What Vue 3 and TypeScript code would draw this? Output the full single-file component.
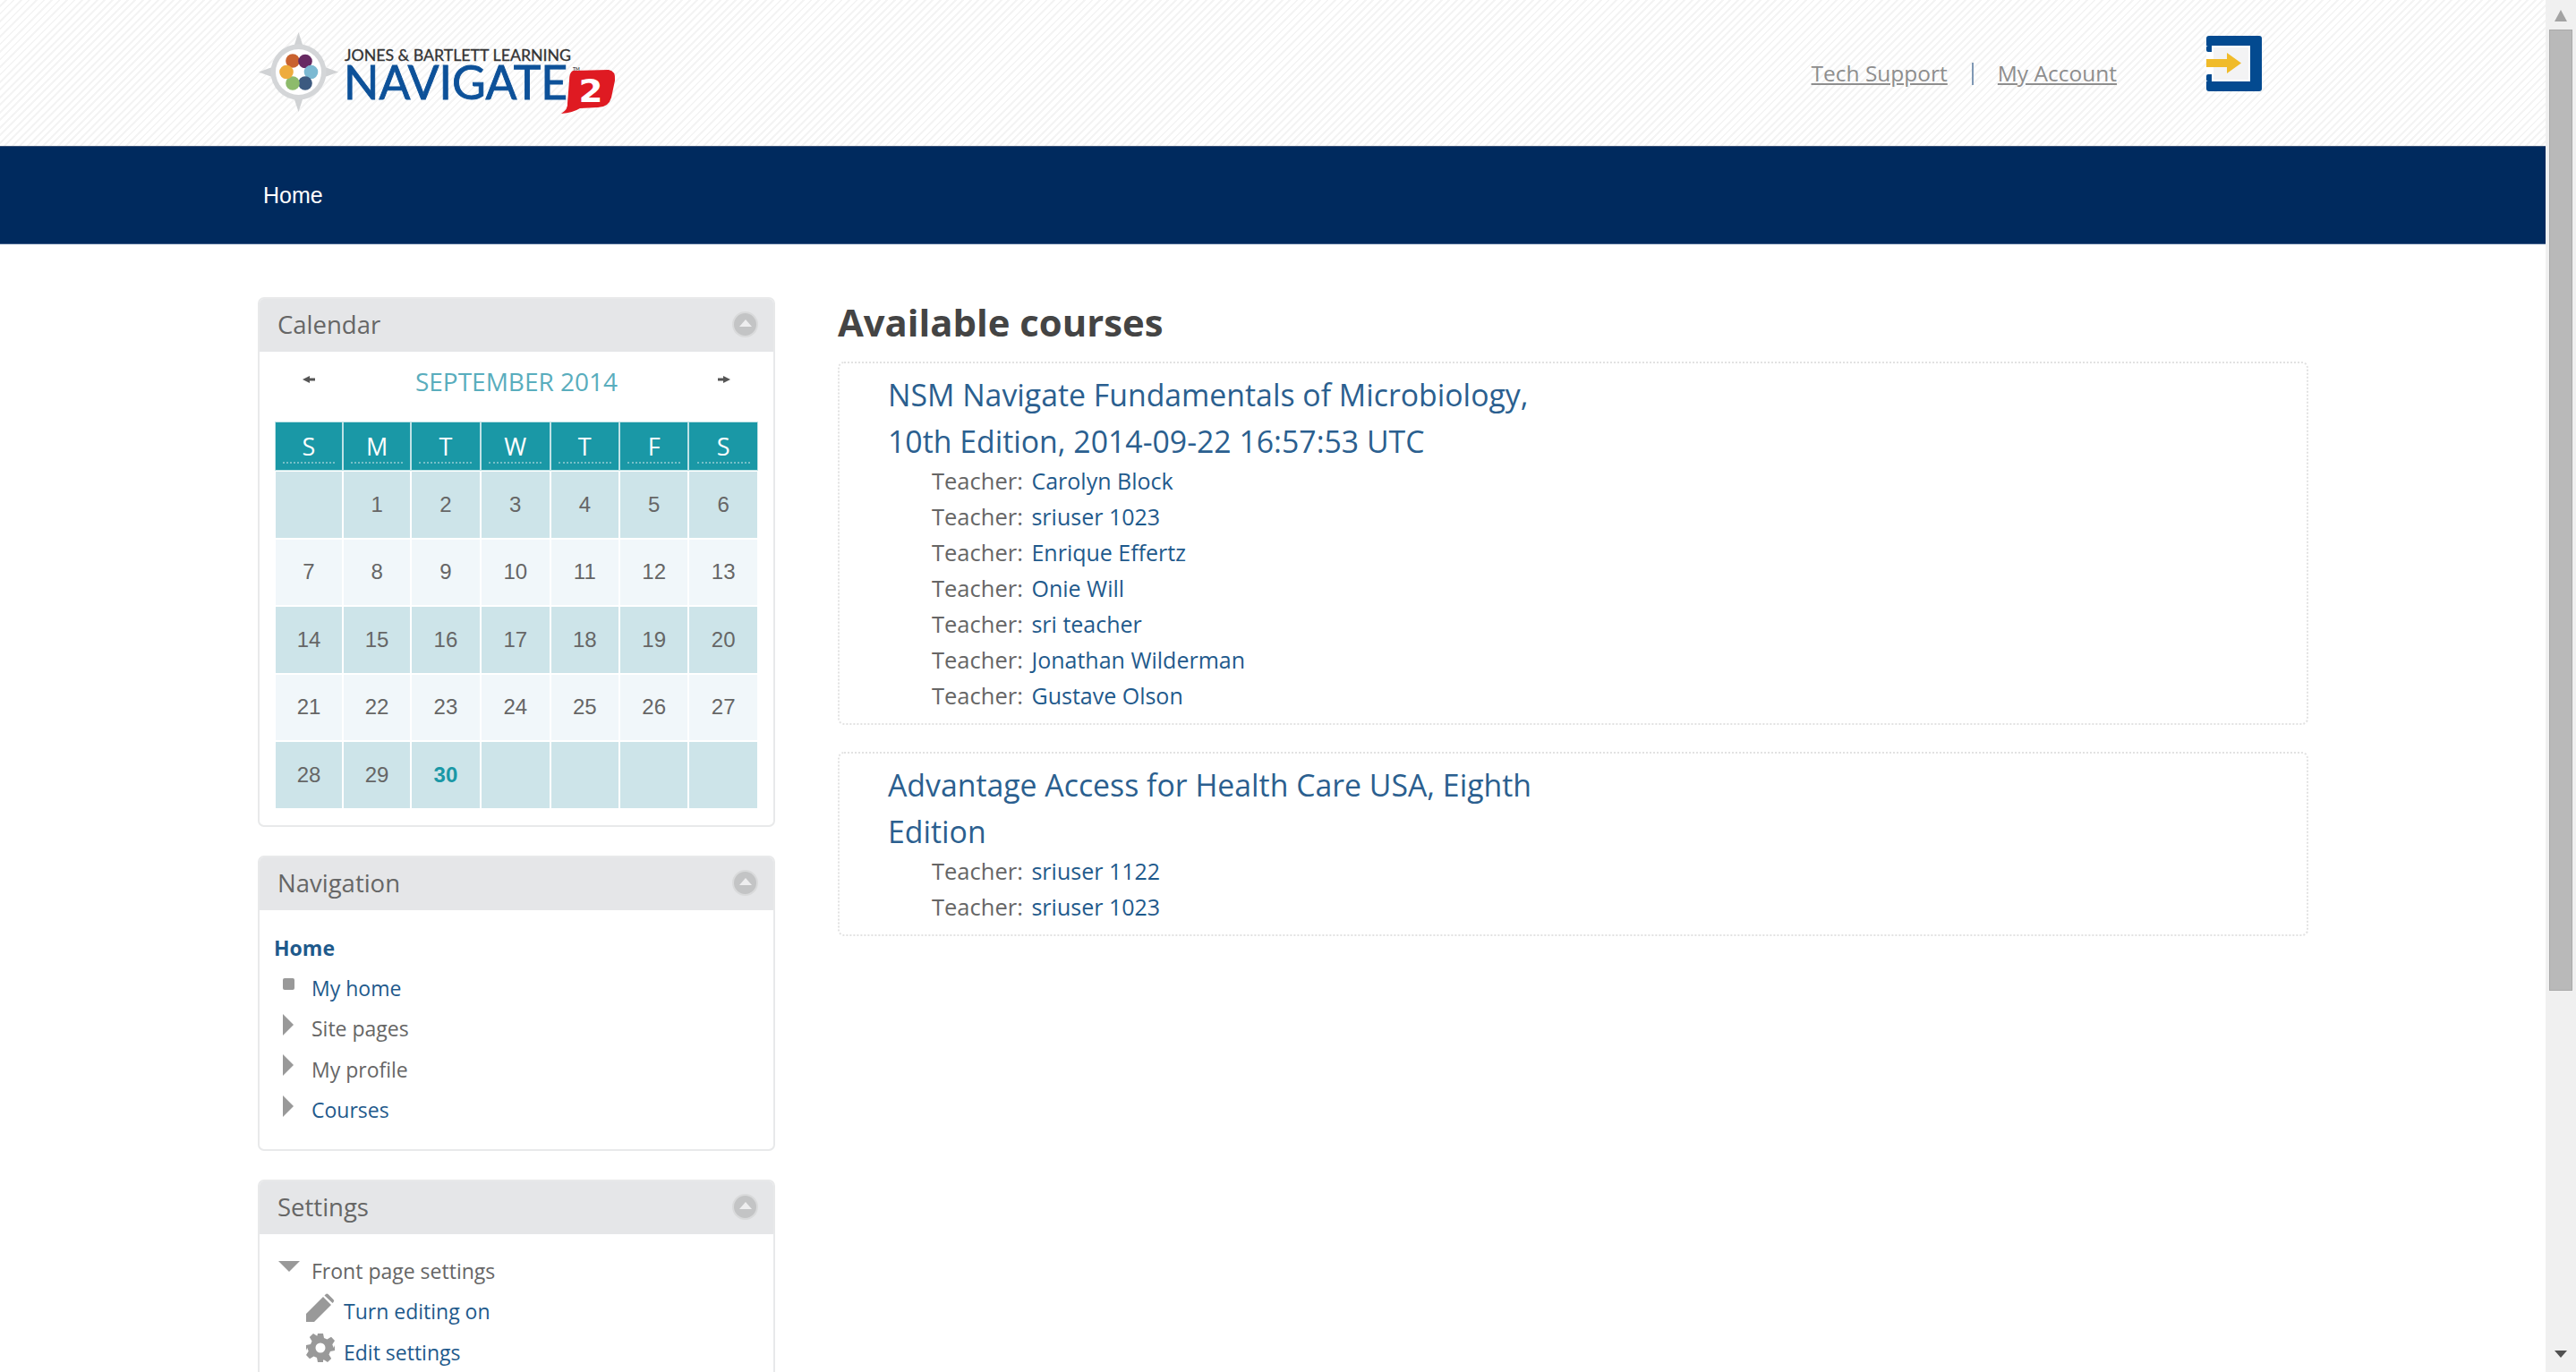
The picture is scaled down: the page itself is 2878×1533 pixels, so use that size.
<script setup lang="ts">
const weekdays: string[] = ['S', 'M', 'T', 'W', 'T', 'F', 'S']

const weeks: (number | null)[][] = [
  [null, 1, 2, 3, 4, 5, 6],
  [7, 8, 9, 10, 11, 12, 13],
  [14, 15, 16, 17, 18, 19, 20],
  [21, 22, 23, 24, 25, 26, 27],
  [28, 29, 30, null, null, null, null]
]

const today = 30

interface NavItem {
  label: string
  kind: 'leaf' | 'branch'
  link: boolean
}

const navItems: NavItem[] = [
  { label: 'My home', kind: 'leaf', link: true },
  { label: 'Site pages', kind: 'branch', link: false },
  { label: 'My profile', kind: 'branch', link: false },
  { label: 'Courses', kind: 'branch', link: true }
]

interface Course {
  lines: string[]
  teachers: string[]
}

const courses: Course[] = [
  {
    lines: ['NSM Navigate Fundamentals of Microbiology,', '10th Edition, 2014-09-22 16:57:53 UTC'],
    teachers: ['Carolyn Block', 'sriuser 1023', 'Enrique Effertz', 'Onie Will', 'sri teacher', 'Jonathan Wilderman', 'Gustave Olson']
  },
  {
    lines: ['Advantage Access for Health Care USA, Eighth', 'Edition'],
    teachers: ['sriuser 1122', 'sriuser 1023']
  }
]
</script>

<template>
  <div class="page">
    <div class="viewport">
      <header class="top">
        <svg class="logo" width="410" height="100" viewBox="280 30 410 100">
          <path d="M333.500 36 L344 68 L378 80.500 L344 93 L333.500 125 L323 93 L289 80.500 L323 68 Z" fill="#d0d2d4" />
          <circle cx="333.500" cy="80.500" r="31" fill="#d4d6d8" />
          <circle cx="333.500" cy="80.500" r="25.500" fill="#fff" />
          <circle cx="327" cy="68" r="7.800" fill="#c9622f" />
          <circle cx="341" cy="68.500" r="7.800" fill="#672a62" />
          <circle cx="347.500" cy="80.500" r="7.800" fill="#7bb9d2" />
          <circle cx="341" cy="93" r="7.800" fill="#3c5a80" />
          <circle cx="327" cy="93" r="7.800" fill="#8dbb6b" />
          <circle cx="320" cy="80.500" r="7.800" fill="#eeac3d" />
          <circle cx="334" cy="81" r="4.500" fill="#fff" />
          <text x="385" y="67.500" font-family="Lato, sans-serif" font-size="17" fill="#333" stroke="#333" stroke-width="0.300" textLength="253" lengthAdjust="spacingAndGlyphs">JONES &amp; BARTLETT LEARNING</text>
          <text x="384" y="111" font-family="Lato, sans-serif" font-size="52" fill="#0d5199" stroke="#0d5199" stroke-width="0.900" textLength="250" lengthAdjust="spacingAndGlyphs">NAVIGATE</text>
          <text x="640" y="78.500" font-family="Lato, sans-serif" font-size="5" font-weight="700" fill="#444">TM</text>
          <path d="M640 79 L680 78 Q688 79 687 90 L683 109 Q680 120 668 120 L648 121 Q640 126 627 127 Q635 122 634 115 L636 90 Q636 81 640 79 Z" fill="#df1a22" />
          <text x="660" y="114" text-anchor="middle" font-family="'DejaVu Sans', sans-serif" font-size="36" font-weight="700" fill="#fff" textLength="27" lengthAdjust="spacingAndGlyphs">2</text>
        </svg>
        <div class="top-links">
          <a class="top-link">Tech Support</a>
          <span class="top-sep"></span>
          <a class="top-link">My Account</a>
        </div>
        <svg class="login-icon" width="62" height="62" viewBox="0 0 62 62">
          <rect width="62" height="62" rx="3" fill="#034a90" />
          <rect x="0" y="11" width="49" height="40" fill="#fff" />
          <rect x="8" y="13" width="39" height="36" fill="#f3f3f4" />
          <rect x="0" y="11" width="8" height="7" fill="#034a90" rx="2" />
          <rect x="0" y="43" width="8" height="8" fill="#034a90" rx="2" />
          <rect x="6" y="11" width="2" height="7" fill="#fff" />
          <rect x="6" y="43" width="2" height="8" fill="#fff" />
          <path d="M0 26 H23 V19 L39 30.500 L23 42 V35 H0 Z" fill="#f0bb2a" />
        </svg>
      </header>

      <nav class="navbar">
        <span class="navbar-home">Home</span>
      </nav>

      <div class="content">
        <aside class="side">
          <section class="block">
            <div class="block-head">
              <span class="block-title">Calendar</span>
              <span class="collapse"><i></i></span>
            </div>
            <div class="cal">
              <div class="cal-month">
                <svg width="14" height="8" viewBox="0 0 14 8"><path d="M0 4 L8 0 V2.500 H14 V5.500 H8 V8 Z" fill="#555" /></svg>
                <span class="cal-name">SEPTEMBER 2014</span>
                <svg width="14" height="8" viewBox="0 0 14 8"><path d="M14 4 L6 0 V2.500 H0 V5.500 H6 V8 Z" fill="#555" /></svg>
              </div>
              <div class="cal-grid">
                <div v-for="(d, i) in weekdays" :key="'h' + i" class="cal-th"><span>{{ d }}</span></div>
                <template v-for="(week, w) in weeks" :key="w">
                  <div
                    v-for="(day, i) in week"
                    :key="i"
                    class="cal-td"
                    :class="{ odd: w % 2 === 0, today: day === today }"
                  >{{ day }}</div>
                </template>
              </div>
            </div>
          </section>

          <section class="block">
            <div class="block-head">
              <span class="block-title">Navigation</span>
              <span class="collapse"><i></i></span>
            </div>
            <div class="tree nav-tree">
              <div class="tree-root">Home</div>
              <div v-for="item in navItems" :key="item.label" class="tree-row">
                <span class="tree-mark">
                  <i :class="item.kind === 'leaf' ? 'dot' : 'arrow'"></i>
                </span>
                <span :class="item.link ? 'link' : 'plain'">{{ item.label }}</span>
              </div>
            </div>
          </section>

          <section class="block">
            <div class="block-head">
              <span class="block-title">Settings</span>
              <span class="collapse"><i></i></span>
            </div>
            <div class="tree settings-tree">
              <div class="tree-row">
                <span class="tree-mark"><i class="arrow-down"></i></span>
                <span class="plain">Front page settings</span>
              </div>
              <div class="tree-row sub">
                <svg class="sub-icon" width="32" height="32" viewBox="0 0 32 32">
                  <path d="M0 32 V23 L19 4 L28 13 L9 32 Z M21.500 1.500 Q23 0 24.500 1 L30.500 7 Q32 8.500 30.500 10 L29.500 11 L20.500 2.500 Z" fill="#999" />
                </svg>
                <span class="link">Turn editing on</span>
              </div>
              <div class="tree-row sub">
                <svg class="sub-icon" width="32" height="32" viewBox="0 0 32 32">
                  <path d="M13 0 H19 L20 5 L23.500 6.500 L28 3.800 L32 8 L29.300 12.300 L30.800 16 L32 13 V19 L27 20 L25.500 23.500 L28.200 28 L24 32 L19.700 29.300 L19 30 V32 H13 L12 27 L8.500 25.500 L4 28.200 L0 24 L2.700 19.700 L1.200 16 L0 19 V13 L5 12 L6.500 8.500 L3.800 4 L8 0 L12.300 2.700 Z M16 10.500 A5.500 5.500 0 1 0 16 21.500 A5.500 5.500 0 1 0 16 10.500 Z" fill="#999" fill-rule="evenodd" />
                </svg>
                <span class="link">Edit settings</span>
              </div>
            </div>
          </section>
        </aside>

        <main class="main">
          <h2 class="main-title">Available courses</h2>
          <article v-for="course in courses" :key="course.lines[0]" class="course">
            <h3 class="course-name">
              <span v-for="line in course.lines" :key="line" class="course-line">{{ line }}</span>
            </h3>
            <ul class="teachers">
              <li v-for="(t, i) in course.teachers" :key="i">Teacher: <span class="link teacher-link">{{ t }}</span></li>
            </ul>
          </article>
        </main>
      </div>
    </div>

    <div class="scrollbar">
      <i class="sb-up"></i>
      <div class="sb-thumb"></div>
      <i class="sb-down"></i>
    </div>
  </div>
</template>

<style>
html, body {
  margin: 0;
  background: #fff;
  overflow: hidden;
}
</style>

<style scoped>
.page {
  display: flex;
  height: 1533px;
  overflow: hidden;
  font-family: "Open Sans", "Noto Sans", sans-serif;
  color: #666;
}

.viewport {
  flex: 1;
  min-width: 0;
  overflow: hidden;
}

.top {
  display: flex;
  align-items: flex-start;
  height: 163px;
  box-sizing: border-box;
  padding: 30px 317px 0 280px;
  background: repeating-linear-gradient(135deg, #fff 0 4px, #f4f4f4 4px 6px);
}

.logo {
  display: block;
  flex: none;
}

.top-links {
  display: flex;
  align-items: center;
  margin-left: auto;
  margin-top: 36px;
  height: 32px;
}

.top-link {
  color: #8e8e8e;
  font-size: 24.500px;
  line-height: 32px;
  text-decoration: underline;
}

.top-sep {
  width: 2px;
  height: 25px;
  margin: 0 27px;
  background: #7f98b4;
}

.login-icon {
  flex: none;
  margin: 10px 0 0 100px;
}

.navbar {
  display: flex;
  align-items: center;
  height: 110px;
  box-sizing: border-box;
  padding: 0 0 0 294px;
  background: #002a5e;
  border-top: 1px solid #3c5478;
  border-bottom: 1px solid #47658f;
}

.navbar-home {
  color: #fff;
  font-family: "Liberation Sans", Arial, sans-serif;
  font-size: 25px;
}

.content {
  display: flex;
  align-items: flex-start;
  gap: 70px;
  padding: 59px 0 0 288px;
}

.side {
  display: flex;
  flex-direction: column;
  gap: 32px;
  flex: none;
  width: 578px;
}

.block {
  box-sizing: border-box;
  border: 2px solid #e8e9ea;
  border-radius: 7px;
  background: #fff;
  overflow: hidden;
}

.block-head {
  display: flex;
  align-items: center;
  justify-content: space-between;
  height: 57px;
  padding: 0 17px 2px 20px;
  background: #e5e6e8;
}

.block-title {
  font-size: 27.500px;
  color: #666;
}

.collapse {
  display: flex;
  align-items: center;
  justify-content: center;
  box-sizing: border-box;
  width: 29px;
  height: 29px;
  border: 2px solid #d9dadb;
  border-radius: 50%;
  background: #c3c4c5;
}

.collapse i {
  display: block;
  width: 0;
  height: 0;
  margin-top: -3px;
  border-left: 7px solid transparent;
  border-right: 7px solid transparent;
  border-bottom: 8px solid #eeeeef;
}

.cal {
  padding: 0 18px 19px;
}

.cal-month {
  display: flex;
  align-items: center;
  justify-content: space-between;
  height: 79px;
  box-sizing: border-box;
  padding: 0 30px 13px;
}

.cal-month svg {
  margin-top: -5px;
}

.cal-name {
  color: #59adbd;
  font-size: 28px;
  line-height: 1;
}

.cal-grid {
  display: grid;
  grid-template-columns: 74fr 74fr 75.500fr 76fr 75fr 75.500fr 75.500fr;
  grid-template-rows: 53px repeat(5, 73.500px);
  gap: 2px;
}

.cal-th {
  display: flex;
  align-items: center;
  justify-content: center;
  background: #1a98a6;
  outline: 1px solid #bfe2e6;
  color: #fff;
  font-size: 27px;
}

.cal-th span {
  display: block;
  width: 78%;
  text-align: center;
  line-height: 34px;
  border-bottom: 2px dotted #76bfc8;
  margin-top: 2px;
}

.cal-td {
  display: flex;
  align-items: center;
  justify-content: center;
  background: #f1f7fa;
  color: #666;
  font-family: "Liberation Sans", Arial, sans-serif;
  font-size: 24px;
}

.cal-td.odd {
  background: #cde4e9;
}

.cal-td.today {
  color: #1a98a6;
  font-weight: 700;
}

.tree {
  font-size: 23px;
  line-height: 45.500px;
  padding: 0 0 0 16px;
}

.nav-tree {
  padding-top: 20px;
  padding-bottom: 20px;
}

.settings-tree {
  padding-top: 19px;
  padding-bottom: 60px;
}

.tree-root {
  color: #1f5a8c;
  font-weight: 700;
  line-height: 45px;
  font-size: 23px;
}

.tree-row {
  display: flex;
  align-items: center;
  height: 45.500px;
}

.tree-mark {
  flex: none;
  display: flex;
  justify-content: flex-start;
  align-items: center;
  width: 42px;
  height: 100%;
  padding: 0 0 10px 10px;
  box-sizing: border-box;
}

.dot {
  display: block;
  width: 13px;
  height: 13px;
  border-radius: 2px;
  background: #999;
}

.arrow {
  display: block;
  width: 0;
  height: 0;
  border-top: 12px solid transparent;
  border-bottom: 12px solid transparent;
  border-left: 12px solid #999;
}

.arrow-down {
  display: block;
  width: 0;
  height: 0;
  margin-left: -5px;
  border-left: 12px solid transparent;
  border-right: 12px solid transparent;
  border-top: 12px solid #999;
}

.tree-row.sub {
  padding-left: 36px;
}

.sub-icon {
  flex: none;
  margin-right: 10px;
  margin-top: -10px;
}

.link {
  color: #1f5a8c;
}

.plain {
  color: #666;
}

.main {
  flex: none;
  width: 1643px;
}

.main-title {
  margin: 0;
  height: 72px;
  color: #444;
  font-size: 41.800px;
  font-weight: 700;
  line-height: 56px;
}

.course {
  box-sizing: border-box;
  margin-bottom: 30px;
  padding: 9px 12px 11px 54px;
  border: 2px dotted #e2e2e2;
  border-radius: 7px;
}

.course-name {
  margin: 0;
  color: #2b5f8f;
  font-size: 33.800px;
  font-weight: 400;
  line-height: 52px;
}

.course-line {
  display: block;
}

.teachers {
  margin: -2px 0 0;
  padding: 0 0 0 49px;
  list-style: none;
  font-size: 25.500px;
  line-height: 40px;
}

.teacher-link {
  margin-left: 3px;
  font-size: 25px;
}

.scrollbar {
  flex: none;
  display: flex;
  flex-direction: column;
  align-items: center;
  width: 34px;
  height: 1533px;
  background: #f0f0f0;
}

.sb-up {
  display: block;
  width: 0;
  height: 0;
  margin-top: 11px;
  border-left: 7px solid transparent;
  border-right: 7px solid transparent;
  border-bottom: 13px solid #a3a3a3;
}

.sb-thumb {
  box-sizing: border-box;
  width: 26px;
  height: 1074px;
  margin-top: 9px;
  background: #b9b9b9;
  border: 1px solid #a9a9a9;
}

.sb-down {
  display: block;
  width: 0;
  height: 0;
  margin-top: 402px;
  border-left: 7px solid transparent;
  border-right: 7px solid transparent;
  border-top: 8px solid #505050;
}
</style>
